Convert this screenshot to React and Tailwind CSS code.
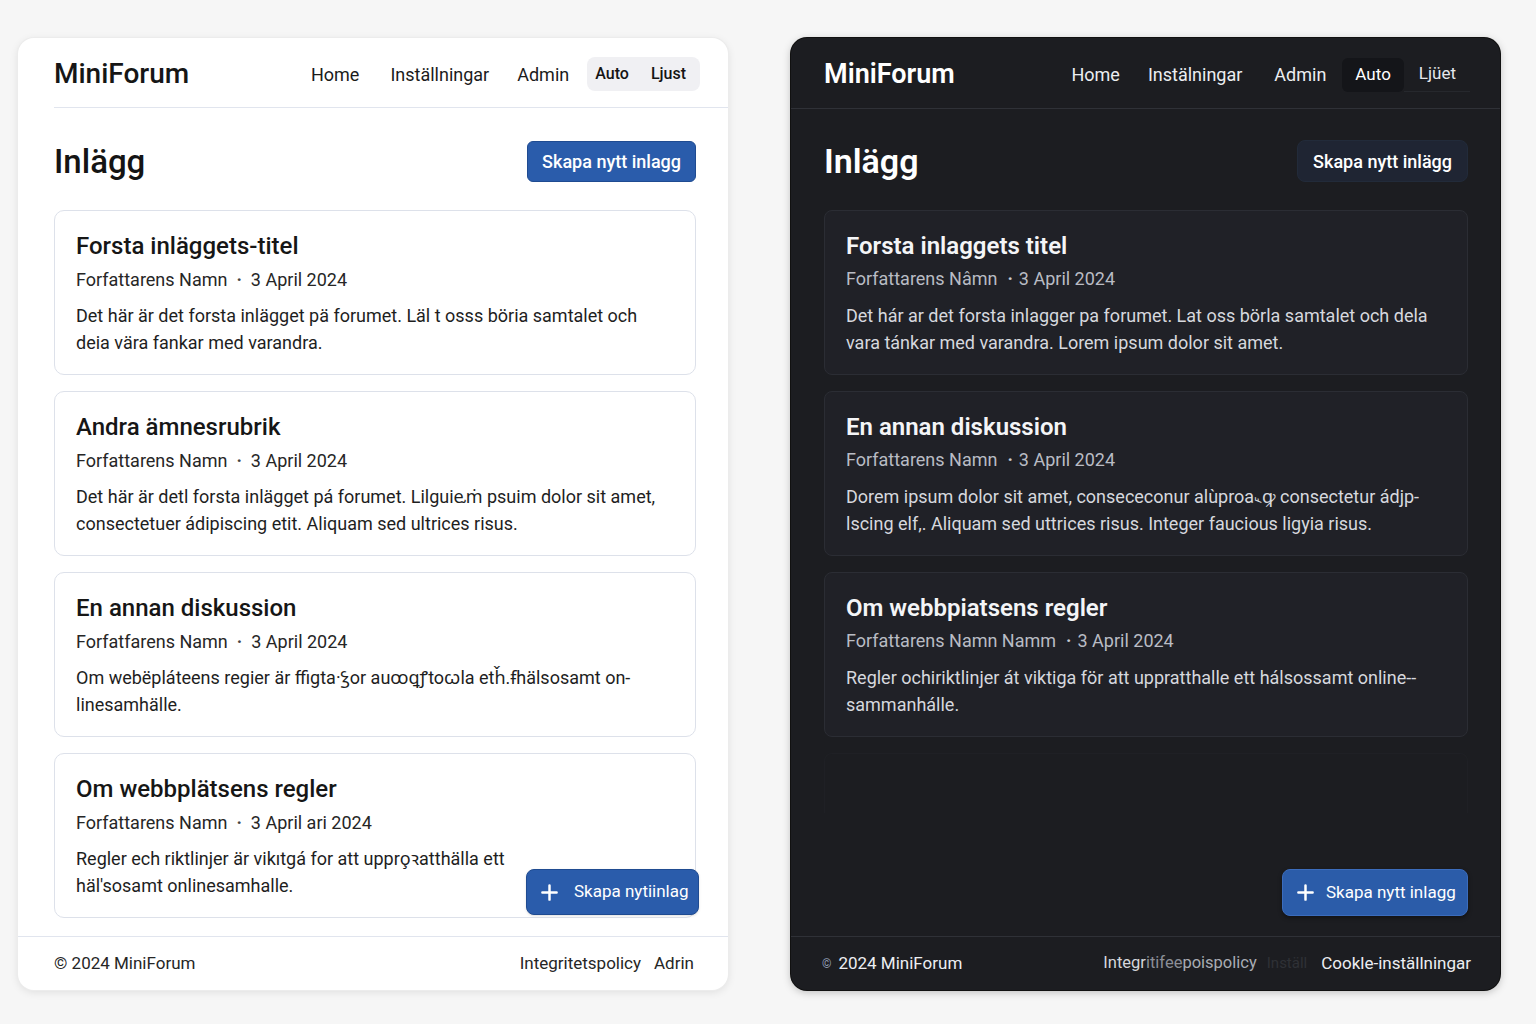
import React from "react";

const lightPosts = [
  {
    title: "Forsta inläggets-titel",
    meta: "Forfattarens Namn",
    date: "3 April 2024",
    l1: "Det här är det forsta inlägget pä forumet. Läl t osss böria samtalet och",
    l2: "deia vära fankar med varandra.",
  },
  {
    title: "Andra ämnesrubrik",
    meta: "Forfattarens Namn",
    date: "3 April 2024",
    l1: "Det här är detl forsta inlägget pá forumet. Lilguiⱸṁ psuim dolor sit amet,",
    l2: "consectetuer ádipiscing etit. Aliquam sed ultrices risus.",
  },
  {
    title: "En annan diskussion",
    meta: "Forfatfarens Namn",
    date: "3 April 2024",
    l1: "Om webëpláteens regier är ffigta·ꝣor auꝏꝗꝭtoꞷla etȟ.ꞙhälsosamt on-",
    l2: "linesamhälle.",
  },
  {
    title: "Om webbplätsens regler",
    meta: "Forfattarens Namn",
    date: "3 April ari 2024",
    l1: "Regler ech riktlinjer är vikıtgá for att uppro̧ꝛatthälla ett",
    l2: "häl'sosamt onlinesamhalle.",
  },
];

const darkPosts = [
  {
    title: "Forsta inlaggets titel",
    meta: "Forfattarens Nâmn",
    date: "3 April 2024",
    l1: "Det hár ar det forsta inlagger pa forumet. Lat oss börla samtalet och dela",
    l2: "vara tánkar med varandra. Lorem ipsum dolor sit amet.",
  },
  {
    title: "En annan diskussion",
    meta: "Forfattarens Namn",
    date: "3 April 2024",
    l1: "Dorem ipsum dolor sit amet, consececonur alùproa꜡ꝙ consectetur ádjp-",
    l2: "lscing elf,. Aliquam sed uttrices risus. Integer faucious ligyia risus.",
  },
  {
    title: "Om webbpiatsens regler",
    meta: "Forfattarens Namn Namm",
    date: "3 April 2024",
    l1: "Regler ochiriktlinjer át viktiga för att uppratthalle ett hálsossamt online--",
    l2: "sammanhálle.",
  },
];

const font = { fontFamily: "Roboto, 'Noto Sans', sans-serif" };

function Plus({ className }) {
  return (
    <svg viewBox="0 0 20 20" className={className} fill="none" stroke="currentColor" strokeWidth="2.6" strokeLinecap="round">
      <path d="M10 2.5v15M2.5 10h15" />
    </svg>
  );
}

function LightCard({ p }) {
  return (
    <div className="h-[165px] rounded-[10px] border border-[#dde1ea] bg-white px-[21px] pt-[20px]">
      <div className="text-[24px] leading-[30px] font-medium text-[#161616]">{p.title}</div>
      <div className="mt-[7px] flex items-center text-[18px] leading-[24px] text-[#262626]">
        <span>{p.meta}</span>
        <span className="mx-[9px] text-[#444] font-bold">·</span>
        <span>{p.date}</span>
      </div>
      <div className="mt-[10px] whitespace-nowrap text-[18px] leading-[27px] text-[#1e1e1e]">
        <div>{p.l1}</div>
        <div>{p.l2}</div>
      </div>
    </div>
  );
}

function DarkCard({ p }) {
  return (
    <div className="h-[165px] rounded-[8px] border border-[#2b2d34] bg-[#202127] px-[21px] pt-[20px]">
      <div className="text-[24px] leading-[30px] font-semibold text-[#f4f5f7]">{p.title}</div>
      <div className="mt-[6px] flex items-center text-[18px] leading-[24px] text-[#b9bcc4]">
        <span>{p.meta}</span>
        <span className="ml-[10px] mr-[6px] font-bold text-[#c8cad0]">·</span>
        <span>{p.date}</span>
      </div>
      <div className="mt-[11px] whitespace-nowrap text-[18px] leading-[27px] text-[#d6d8de]">
        <div>{p.l1}</div>
        <div>{p.l2}</div>
      </div>
    </div>
  );
}

function LightPanel() {
  return (
    <div className="relative flex h-[952px] w-[710px] flex-col rounded-[16px] bg-white shadow-[0_2px_8px_rgba(0,0,0,0.10)] ring-1 ring-[#ececec]">
      <header className="ml-[36px] flex h-[70px] items-center border-b border-[#e1e5ee] pt-[3px] pr-[28px]">
        <div className="text-[28px] font-medium text-[#161616]">MiniForum</div>
        <nav className="ml-auto flex items-center text-[18px] text-[#1b1b1b]">
          <span className="mr-[31px]">Home</span>
          <span className="mr-[28px]">Inställningar</span>
          <span className="mr-[18px]">Admin</span>
          <div className="flex h-[34px] items-center rounded-[8px] bg-[#f0f0f3] px-[8px] text-[16px] font-medium text-[#141414]">
            <span className="mr-[22px]">Auto</span>
            <span className="mr-[6px]">Ljust</span>
          </div>
        </nav>
      </header>
      <main className="px-[36px] pr-[32px]">
        <div className="mt-[33px] flex h-[41px] items-center justify-between">
          <h1 className="text-[33px] font-medium text-[#141414]">Inlägg</h1>
          <button className="h-[41px] rounded-[6px] border border-[#1f4b91] bg-[#2a5cab] px-[14px] text-[18px] font-medium text-white">
            Skapa nytt inlagg
          </button>
        </div>
        <div className="mt-[28px] flex flex-col gap-[16px]">
          {lightPosts.map((p, i) => (
            <LightCard key={i} p={p} />
          ))}
        </div>
      </main>
      <footer className="mt-auto flex h-[54px] items-center border-t border-[#e1e5ee] pl-[36px] pr-[34px] text-[17px] text-[#262626]">
        <span>© 2024 MiniForum</span>
        <span className="ml-auto">Integritetspolicy</span>
        <span className="ml-[13px]">Adrin</span>
      </footer>
      <button className="absolute left-[508px] top-[831px] flex h-[46px] w-[173px] items-center rounded-[8px] border border-[#1f4b91] bg-[#2a5cab] pl-[13px] text-[17px] text-white shadow-sm">
        <Plus className="h-[19px] w-[19px]" />
        <span className="ml-[15px]">Skapa nytiinlag</span>
      </button>
    </div>
  );
}

function DarkPanel() {
  return (
    <div className="relative flex h-[952px] w-[709px] flex-col rounded-[16px] bg-[#1c1d21] shadow-[0_2px_8px_rgba(0,0,0,0.25)] ring-1 ring-[#111]">
      <header className="flex h-[71px] items-center border-b border-[#2f3137] pl-[33px] pr-[30px] pt-[3px]">
        <div className="text-[27px] font-semibold text-white">MiniForum</div>
        <nav className="ml-auto flex items-center text-[18px] text-[#eceef2]">
          <span className="mr-[28px]">Home</span>
          <span className="mr-[32px]">Instälningar</span>
          <span className="mr-[16px]">Admin</span>
          <div className="flex h-[34px] items-center rounded-[6px] bg-[#141519] px-[13px] text-[17px] text-white">Auto</div>
          <div className="flex h-[34px] items-start border-b border-[#26282d] pl-[15px] pr-[14px] pt-[3px] text-[17px] text-[#e6e8ec]">Ljüet</div>
        </nav>
      </header>
      <main className="px-[33px] pr-[32px]">
        <div className="mt-[31px] flex h-[42px] items-center justify-between">
          <h1 className="text-[34px] font-semibold text-white">Inlägg</h1>
          <button className="h-[42px] rounded-[8px] border border-[#222b3a] bg-[#1f2533] px-[15px] text-[18px] font-medium text-white">
            Skapa nytt inlägg
          </button>
        </div>
        <div className="mt-[28px] flex flex-col gap-[16px]">
          {darkPosts.map((p, i) => (
            <DarkCard key={i} p={p} />
          ))}
          <div className="h-[60px] rounded-t-[8px] border border-b-0 border-[#1f2025]" />
        </div>
      </main>
      <footer className="mt-auto flex h-[54px] items-center border-t border-[#2f3137] pl-[31px] pr-[29px] text-[17px]">
        <span className="text-[12px] text-[#8e9ab0]">©</span>
        <span className="ml-[7px] text-[#eceef2]">2024 MiniForum</span>
        <span className="ml-auto text-[16.5px] text-[#d5d7dc]">
          Integr<span className="text-[#8b8e96]">itifee</span>
          <span className="text-[#a9acb3]">poispolicy</span>
        </span>
        <span className="ml-[10px] text-[15px] text-[#2f3136]">Inställ</span>
        <span className="ml-[14px] text-[#eceef2]">Cookle-inställningar</span>
      </footer>
      <button className="absolute left-[491px] top-[831px] flex h-[47px] w-[186px] items-center rounded-[8px] border border-[#3b6cbc] bg-[#2b5ca9] pl-[13px] text-[17px] text-white shadow-[0_2px_4px_rgba(0,0,0,0.4)]">
        <Plus className="h-[19px] w-[19px]" />
        <span className="ml-[11px]">Skapa nytt inlagg</span>
      </button>
    </div>
  );
}

export default function App() {
  return (
    <div style={font} className="flex h-[1024px] w-[1536px] items-start bg-[#f6f6f6] pl-[18px] pt-[38px]">
      <LightPanel />
      <div className="ml-[63px]">
        <DarkPanel />
      </div>
    </div>
  );
}
